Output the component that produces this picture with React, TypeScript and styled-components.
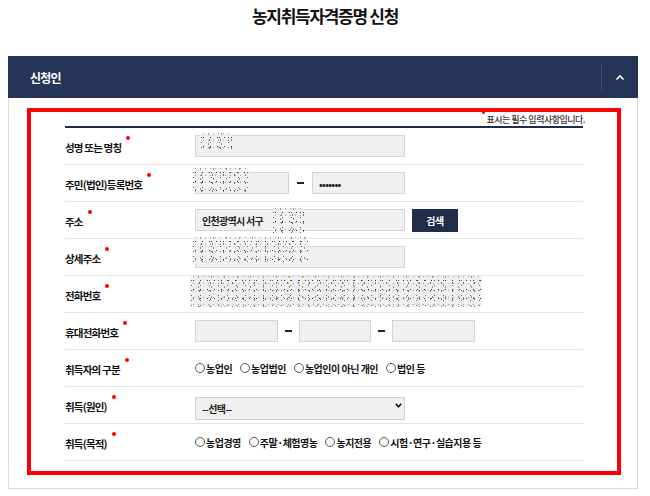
import React from "react";
import styled, { createGlobalStyle } from "styled-components";

const GlobalStyle = createGlobalStyle`
  body {
    margin: 0;
    background: #fff;
    font-family: "Noto Sans CJK KR", "Noto Sans", sans-serif;
    color: #111;
  }
`;

const Page = styled.div`
  width: 650px;
`;

const Title = styled.h1`
  margin: 0;
  height: 56px;
  padding-top: 5px;
  box-sizing: border-box;
  text-align: center;
  font-size: 17px;
  font-weight: 700;
  letter-spacing: -1.3px;
  line-height: 22px;
  color: #111;
`;

const Panel = styled.section`
  margin-left: 8px;
  width: 630px;
`;

const PanelHeader = styled.header`
  height: 42px;
  display: flex;
  align-items: center;
  padding-left: 22px;
  background: #243557;
  color: #fff;
  font-size: 12px;
  font-weight: 700;
  letter-spacing: -0.8px;
`;

const Toggle = styled.button`
  margin-left: auto;
  width: 37px;
  height: 28px;
  padding: 0;
  display: flex;
  align-items: center;
  justify-content: center;
  background: transparent;
  border: 0;
  border-left: 1px solid rgba(255, 255, 255, 0.12);
`;

const PanelBody = styled.div`
  border: 1px solid #d9d9d9;
  border-top: 0;
  padding: 10px 16px 13px 18px;
`;

const Highlight = styled.div`
  border: 4px solid #ff0000;
  padding: 0 34px 10px;
`;

const Note = styled.div`
  height: 14px;
  margin-right: -2px;
  display: flex;
  justify-content: flex-end;
  align-items: center;
  font-size: 9px;
  font-weight: 500;
  letter-spacing: -0.5px;
  color: #333;
`;

const NoteDot = styled.span`
  width: 3px;
  height: 3px;
  border-radius: 50%;
  background: #e00;
  margin-right: 1px;
  position: relative;
  top: -7px;
`;

const Table = styled.div`
  border-top: 2px solid #1f2c4a;
`;

const Row = styled.div`
  display: grid;
  grid-template-columns: 130px 1fr;
  align-items: center;
  height: 36px;
  border-bottom: 1px solid #e6e6e6;
`;

const Label = styled.div`
  display: inline-flex;
  align-items: flex-start;
  padding-top: 3px;
  font-size: 10.5px;
  font-weight: 700;
  letter-spacing: -0.8px;
  line-height: 14px;
  &::after {
    content: "";
    width: 4px;
    height: 4px;
    border-radius: 50%;
    background: #f00;
    margin-left: 5px;
    margin-top: -5px;
  }
`;

const Field = styled.div`
  position: relative;
  display: flex;
  align-items: center;
  height: 100%;
`;

const Input = styled.input<{ $w: number }>`
  width: ${(p) => p.$w}px;
  height: 22px;
  box-sizing: border-box;
  border: 1px solid #d4d4d4;
  background: #f0f0f0;
  padding: 0 6px;
  font: inherit;
  font-size: 10px;
  font-weight: 700;
  letter-spacing: -0.7px;
  color: #222;
  outline: none;
`;

const Dash = styled.span<{ $w: number }>`
  width: ${(p) => p.$w}px;
  display: flex;
  justify-content: center;
  &::before {
    content: "";
    width: 7px;
    height: 2px;
    background: #222;
  }
`;

const SearchButton = styled.button`
  margin-left: 7px;
  width: 46px;
  height: 23px;
  border: 0;
  background: #1f2d4a;
  color: #fff;
  font: inherit;
  font-size: 10px;
  font-weight: 700;
  letter-spacing: -0.5px;
`;

const Censor = styled.span<{ $x: number; $y: number; $w: number; $h: number; $solid?: boolean }>`
  position: absolute;
  left: ${(p) => p.$x}px;
  top: ${(p) => p.$y}px;
  width: ${(p) => p.$w}px;
  height: ${(p) => p.$h}px;
  background-image:
    radial-gradient(circle, #222 0 0.55px, transparent 0.85px),
    radial-gradient(circle, #3b6fb5 0 0.55px, transparent 0.85px),
    radial-gradient(circle, #c98035 0 0.55px, transparent 0.85px),
    radial-gradient(circle, #555 0 0.5px, transparent 0.8px),
    radial-gradient(circle, #999 0 0.5px, transparent 0.8px);
  background-size: 7px 9px, 11px 8px, 13px 10px, 9px 5px, 5px 7px;
  background-position: 0 0, 4px 3px, 2px 6px, 6px 2px, 1px 4px;
  background-color: ${(p) => (p.$solid ? "#eeeeee" : "rgba(242,242,242,0.7)")};
  border-radius: 3px;
  opacity: 0.9;
`;

const RadioGroup = styled.div`
  display: flex;
  align-items: center;
  gap: 8px;
`;

const RadioItem = styled.label`
  display: inline-flex;
  align-items: center;
  font-size: 10px;
  font-weight: 700;
  letter-spacing: -0.5px;
  color: #111;
`;

const RadioCircle = styled.span`
  width: 8px;
  height: 8px;
  border: 1px solid #555;
  border-radius: 50%;
  margin-right: 1px;
`;

const SelectBox = styled.div`
  position: relative;
  width: 210px;
  height: 23px;
`;

const Select = styled.select`
  appearance: none;
  width: 100%;
  height: 100%;
  border: 1px solid #cfcfcf;
  background: #f0f0f0;
  padding: 0 6px;
  font: inherit;
  font-size: 10px;
  font-weight: 700;
  letter-spacing: -0.6px;
  color: #222;
`;

const SelectArrow = styled.svg`
  position: absolute;
  right: 3px;
  top: 9px;
`;

function Radios({ items }: { items: string[] }) {
  return (
    <RadioGroup>
      {items.map((t) => (
        <RadioItem key={t}>
          <RadioCircle />
          {t}
        </RadioItem>
      ))}
    </RadioGroup>
  );
}

export default function App() {
  return (
    <Page>
      <GlobalStyle />
      <Title>농지취득자격증명 신청</Title>
      <Panel>
        <PanelHeader>
          신청인
          <Toggle aria-label="접기">
            <svg width="10" height="7" viewBox="0 0 10 7">
              <path d="M1.5 5.5 L5 2 L8.5 5.5" fill="none" stroke="#fff" strokeWidth="1.6" />
            </svg>
          </Toggle>
        </PanelHeader>
        <PanelBody>
          <Highlight>
            <Note>
              <NoteDot />
              표시는 필수 입력사항입니다.
            </Note>
            <Table>
              <Row>
                <Label>성명 또는 명칭</Label>
                <Field>
                  <Input $w={210} defaultValue="" readOnly />
                  <Censor $x={5} $y={5} $w={32} $h={19} />
                </Field>
              </Row>
              <Row>
                <Label>주민(법인)등록번호</Label>
                <Field>
                  <Input $w={94} defaultValue="" readOnly />
                  <Dash $w={23} />
                  <Input $w={93} type="password" defaultValue="1234567" readOnly />
                  <Censor $x={-3} $y={3} $w={58} $h={24} />
                </Field>
              </Row>
              <Row>
                <Label>주소</Label>
                <Field>
                  <Input $w={210} defaultValue="인천광역시 서구" readOnly />
                  <SearchButton>검색</SearchButton>
                  <Censor $x={77} $y={6} $w={33} $h={26} />
                </Field>
              </Row>
              <Row>
                <Label>상세주소</Label>
                <Field>
                  <Input $w={210} defaultValue="" readOnly />
                  <Censor $x={-3} $y={-2} $w={116} $h={27} />
                </Field>
              </Row>
              <Row>
                <Label>전화번호</Label>
                <Field>
                  <Input $w={83} defaultValue="" readOnly />
                  <Dash $w={21} />
                  <Input $w={72} defaultValue="" readOnly />
                  <Dash $w={21} />
                  <Input $w={83} defaultValue="" readOnly />
                  <Censor $x={-5} $y={0} $w={292} $h={31} $solid />
                </Field>
              </Row>
              <Row>
                <Label>휴대전화번호</Label>
                <Field>
                  <Input $w={83} defaultValue="" readOnly />
                  <Dash $w={21} />
                  <Input $w={72} defaultValue="" readOnly />
                  <Dash $w={21} />
                  <Input $w={83} defaultValue="" readOnly />
                </Field>
              </Row>
              <Row>
                <Label>취득자의 구분</Label>
                <Field>
                  <Radios items={["농업인", "농업법인", "농업인이 아닌 개인", "법인 등"]} />
                </Field>
              </Row>
              <Row>
                <Label>취득(원인)</Label>
                <Field>
                  <SelectBox>
                    <Select defaultValue="">
                      <option value="">--선택--</option>
                    </Select>
                    <SelectArrow width="7" height="5" viewBox="0 0 7 5">
                      <path d="M0.8 0.8 L3.5 3.8 L6.2 0.8" fill="none" stroke="#111" strokeWidth="1.6" />
                    </SelectArrow>
                  </SelectBox>
                </Field>
              </Row>
              <Row>
                <Label>취득(목적)</Label>
                <Field>
                  <Radios items={["농업경영", "주말·체험영농", "농지전용", "시험·연구·실습지용 등"]} />
                </Field>
              </Row>
            </Table>
          </Highlight>
        </PanelBody>
      </Panel>
    </Page>
  );
}
